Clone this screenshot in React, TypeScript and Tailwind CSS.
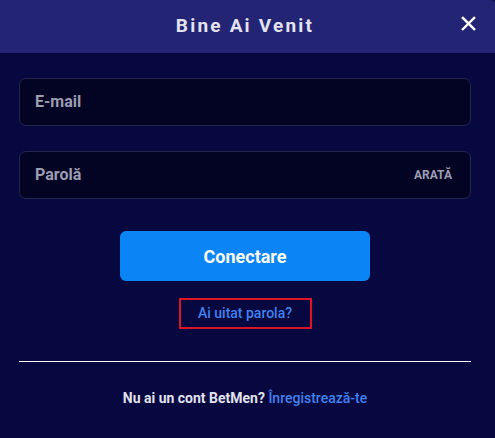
import { useState } from "react";

export default function App() {
  const [email, setEmail] = useState("");
  const [password, setPassword] = useState("");
  const [showPassword, setShowPassword] = useState(false);

  return (
    <div
      className="w-[495px] h-[438px] bg-[#07083f] overflow-hidden"
      style={{ fontFamily: "Roboto, 'Liberation Sans', sans-serif" }}
    >
      {/* Header */}
      <div className="relative h-[53px] bg-[#232474] rounded-tr-[4px] flex items-center justify-center pr-[5px]">
        <h2 className="text-[19px] font-bold tracking-[2.2px] text-[#e2e3f0]">
          Bine Ai Venit
        </h2>
        <button
          type="button"
          aria-label="Închide"
          className="absolute right-[18px] top-[14px] w-[18px] h-[18px] flex items-center justify-center text-white"
        >
          <svg viewBox="0 0 16 16" className="w-[15px] h-[15px]" fill="none">
            <path
              d="M2 2L14 14M14 2L2 14"
              stroke="currentColor"
              strokeWidth="2.6"
              strokeLinecap="square"
            />
          </svg>
        </button>
      </div>

      <form
        className="pl-[19px] pr-[24px] pt-[25px] flex flex-col"
        onSubmit={(e) => e.preventDefault()}
      >
        {/* E-mail */}
        <div className="h-[48px] rounded-[7px] border border-[#25264d] bg-[#030424] flex items-center px-[15px]">
          <input
            type="email"
            value={email}
            onChange={(e) => setEmail(e.target.value)}
            placeholder="E-mail"
            className="w-full bg-transparent text-[16px] font-bold text-white placeholder:text-[#9c9db2] outline-none"
          />
        </div>

        {/* Parolă */}
        <div className="mt-[25px] h-[48px] rounded-[7px] border border-[#25264d] bg-[#030424] flex items-center pl-[15px] pr-[18px]">
          <input
            type={showPassword ? "text" : "password"}
            value={password}
            onChange={(e) => setPassword(e.target.value)}
            placeholder="Parolă"
            className="flex-1 bg-transparent text-[16px] font-bold text-white placeholder:text-[#9c9db2] outline-none"
          />
          <button
            type="button"
            onClick={() => setShowPassword((v) => !v)}
            className="text-[12px] font-bold text-[#9c9db2]"
          >
            ARATĂ
          </button>
        </div>

        {/* Actions */}
        <div className="flex flex-col items-center mt-[32px]">
          <button
            type="submit"
            className="w-[250px] h-[50px] rounded-[6px] bg-[#0b84f6] text-white text-[18px] font-bold"
          >
            Conectare
          </button>
          <a
            href="#"
            className="mt-[17px] w-[133px] h-[31px] border-2 border-[#dc1428] flex items-center justify-center text-[14px] font-medium text-[#3f82f0]"
          >
            Ai uitat parola?
          </a>
        </div>

        <div className="mt-[32px] h-px bg-white" />

        <p className="mt-[26px] text-center text-[14px] font-bold text-[#e1e2f0]">
          Nu ai un cont BetMen?{" "}
          <a href="#" className="font-medium text-[#3f82f0]">
            Înregistrează-te
          </a>
        </p>
      </form>
    </div>
  );
}
